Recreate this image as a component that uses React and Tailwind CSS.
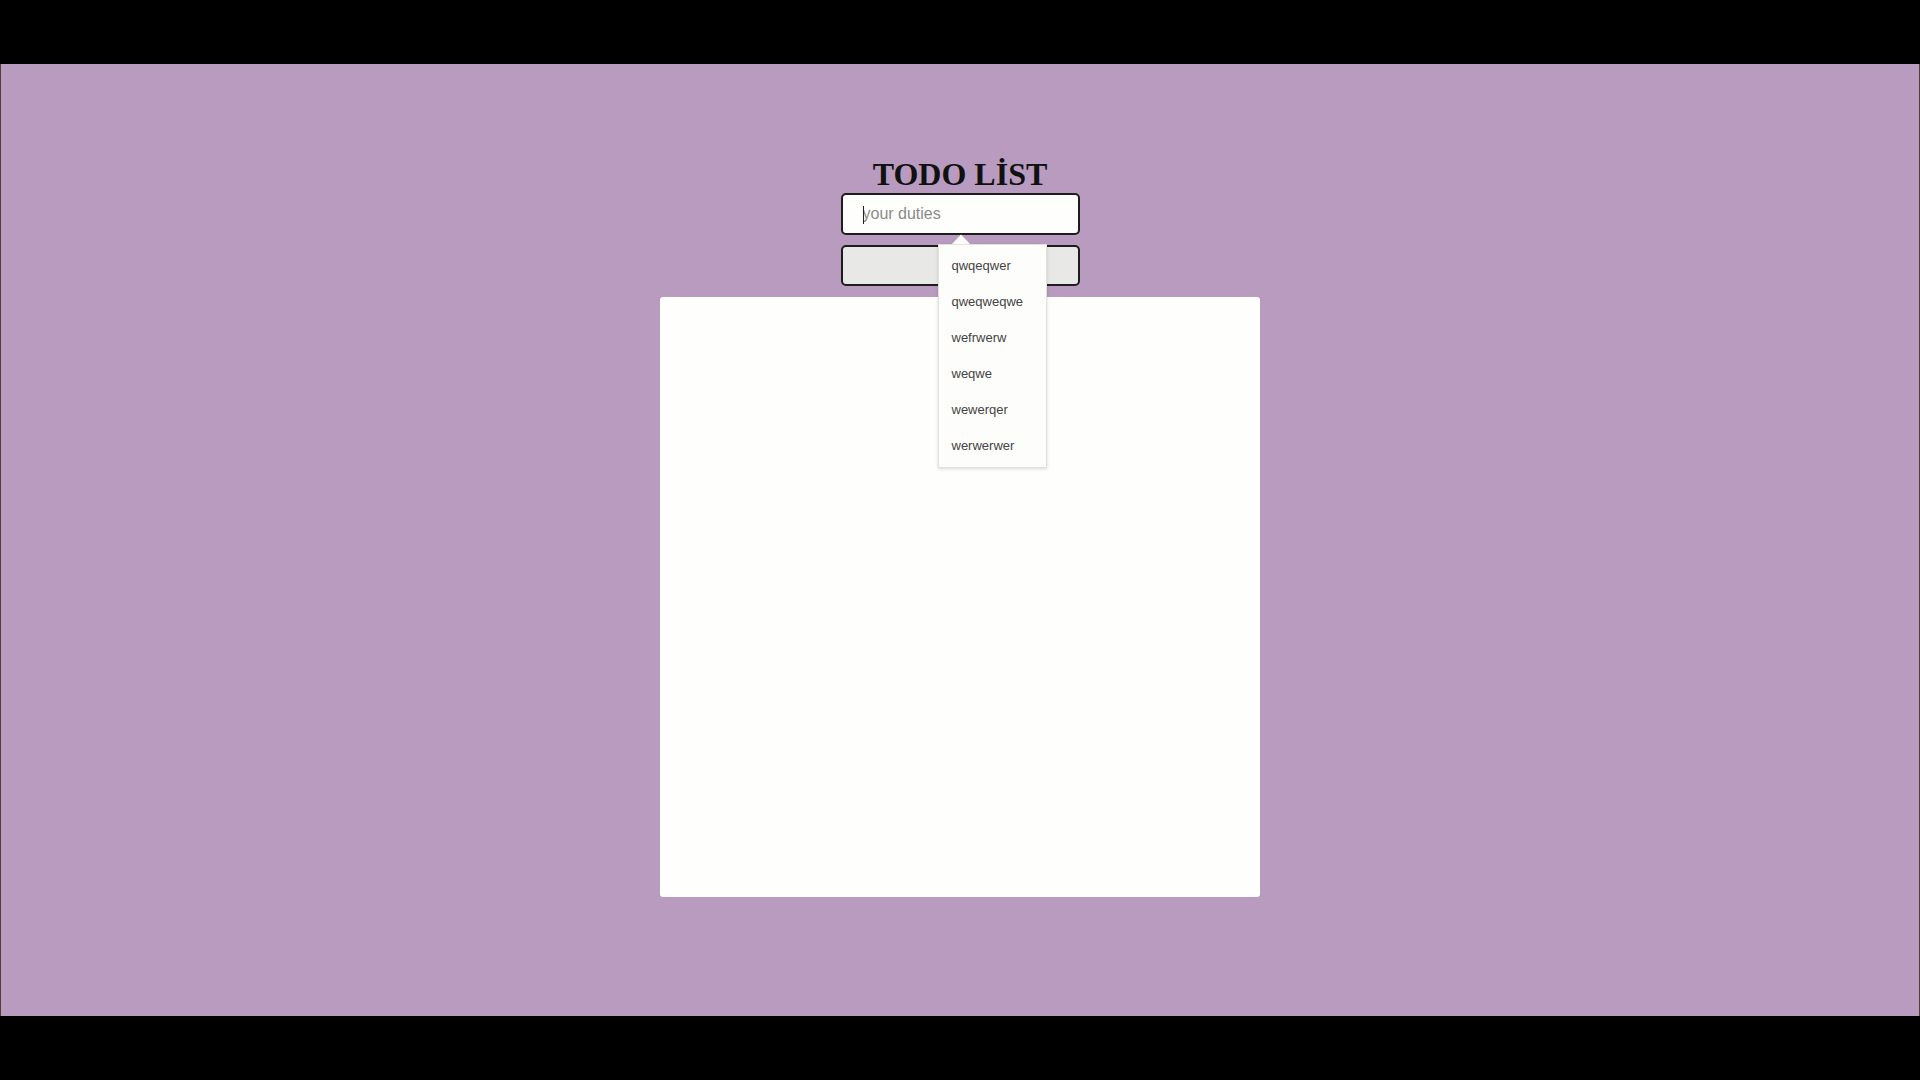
import React from "react";

const items = ["qwqeqwer", "qweqweqwe", "wefrwerw", "weqwe", "wewerqer", "werwerwer"];

export default function App() {
  return (
    <div className="w-[1920px] h-[1080px] bg-black flex flex-col overflow-hidden">
      <div className="h-[64px] shrink-0 bg-black" />
      <div className="h-[952px] shrink-0 bg-[#b89bbf] border-l border-r border-[#4f4038] flex flex-col items-center pt-[92px]">
        <h1
          className="text-[32px] leading-[37px] font-bold text-[#111]"
          style={{ fontFamily: '"Liberation Serif", "Times New Roman", serif' }}
        >
          TODO LİST
        </h1>
        <div className="relative w-[239px] h-[42px] rounded-[5px] border-2 border-[#1d1d1d] bg-[#fefefc] flex items-center pl-[20px]">
          <span className="absolute left-[20px] top-[11px] w-px h-[18px] bg-[#222]" />
          <span
            className="text-[16px] text-[#8a8a8a]"
            style={{ fontFamily: '"Liberation Sans", Arial, sans-serif' }}
          >
            your duties
          </span>
          <div className="absolute left-[95px] top-[39px] z-10">
            <svg width="18" height="10" viewBox="0 0 18 10" className="ml-[14px] block">
              <path d="M0 10 L9 0.5 L18 10 Z" fill="#fdfdfb" />
            </svg>
            <div
              className="w-[109px] bg-[#fdfdfb] border border-[#e2e2de] shadow-[0_1px_3px_rgba(0,0,0,0.15)] pt-[3px] pb-[3px]"
              style={{ fontFamily: '"Liberation Sans", Arial, sans-serif' }}
            >
              {items.map((t) => (
                <div key={t} className="h-[36px] flex items-center pl-[13px] text-[13px] text-[#444]">
                  {t}
                </div>
              ))}
            </div>
          </div>
        </div>
        <div className="mt-[10px] w-[239px] h-[41px] rounded-[5px] border-2 border-[#1d1d1d] bg-[#e8e8e6]" />
        <div className="mt-[11px] w-[600px] h-[600px] rounded-[3px] bg-[#fefefc]" />
      </div>
      <div className="flex-1 bg-black" />
    </div>
  );
}
